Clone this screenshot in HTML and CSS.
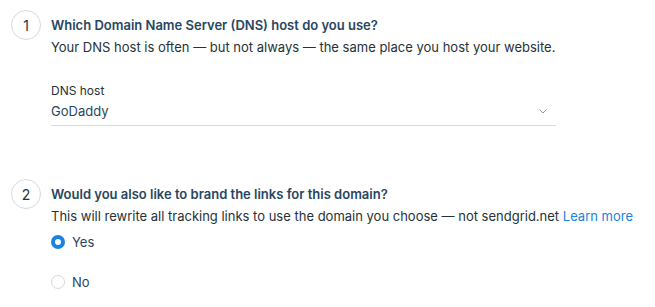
FILE: index.html
```html
<!DOCTYPE html>
<html>
<head>
<meta charset="utf-8">
<link rel="stylesheet" href="styles.css">
</head>
<body>
<div class="steps">
  <section class="step">
    <div class="num">1</div>
    <div class="content">
      <h2 class="title">Which Domain Name Server (DNS) host do you use?</h2>
      <p class="desc">Your DNS host is often — but not always — the same place you host your website.</p>
      <div class="select">
        <div class="label">DNS host</div>
        <div class="value-row">
          <span class="value">GoDaddy</span>
          <svg class="chev" width="8" height="5" viewBox="0 0 8 5"><path d="M0.5 0.5 L4 4 L7.5 0.5" fill="none" stroke="#8d9aa8" stroke-width="1"/></svg>
        </div>
      </div>
    </div>
  </section>
  <section class="step step2">
    <div class="num">2</div>
    <div class="content">
      <h2 class="title">Would you also like to brand the links for this domain?</h2>
      <p class="desc">This will rewrite all tracking links to use the domain you choose — not sendgrid.net <a class="link" href="#">Learn more</a></p>
      <div class="radios">
        <label class="radio"><span class="dot on"></span>Yes</label>
        <label class="radio"><span class="dot"></span>No</label>
      </div>
    </div>
  </section>
</div>
</body>
</html>
```
FILE: styles.css
```css
html, body {
  margin: 0;
  padding: 0;
  background: #fff;
}
body {
  font-family: Inter, "Noto Sans", sans-serif;
  color: #263238;
  font-size: 13px;
}
.steps {
  padding: 10px 0 0 11px;
}
.step {
  display: flex;
  gap: 10px;
  align-items: flex-start;
}
.step2 {
  margin-top: 53px;
}
.num {
  width: 28px;
  height: 28px;
  border: 1px solid #d4dae0;
  border-radius: 50%;
  display: flex;
  align-items: center;
  justify-content: center;
  font-size: 14px;
  color: #263238;
  flex: none;
}
.content {
  padding-top: 6px;
}
.title {
  margin: 0;
  font-size: 13px;
  font-weight: 600;
  color: #294661;
  line-height: 18px;
}
.desc {
  margin: 4px 0 0;
  line-height: 18px;
}
.link {
  color: #1a82e2;
  text-decoration: none;
}
.select {
  width: 505px;
  margin-top: 27px;
  border-bottom: 1px solid #d4dae0;
}
.label {
  font-size: 12px;
  line-height: 16px;
}
.value-row {
  display: flex;
  justify-content: space-between;
  align-items: center;
  padding: 3px 9px 5px 0;
}
.value {
  color: #294661;
  line-height: 18px;
}
.radios {
  display: flex;
  flex-direction: column;
  gap: 22px;
  margin-top: 8px;
}
.radio {
  display: flex;
  align-items: center;
  gap: 7px;
  line-height: 18px;
  color: #294661;
}
.dot {
  width: 14px;
  height: 14px;
  box-sizing: border-box;
  border-radius: 50%;
  border: 1px solid #d4dae0;
}
.dot.on {
  border: 4px solid #1a82e2;
}
```
